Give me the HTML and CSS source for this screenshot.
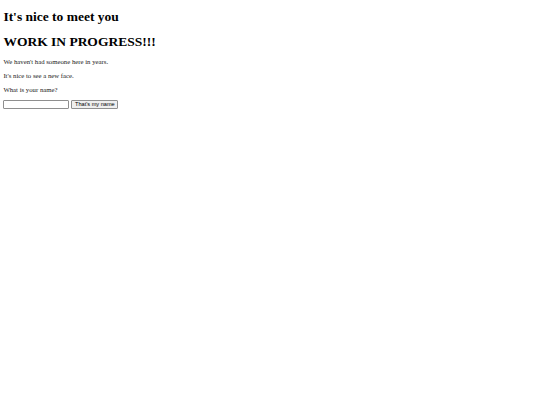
FILE: index.html
```html
<!DOCTYPE html>
<html>
<head>
<meta charset="utf-8">
<title>Hello</title>
<link rel="stylesheet" href="styles.css">
</head>
<body class="page">
<h1 class="title">It's nice to meet you</h1>
<h1 class="title title-sub">WORK IN PROGRESS!!!</h1>
<p class="text">We haven't had someone here in years.</p>
<p class="text">It's nice to see a new face.</p>
<p class="text">What is your name?</p>
<form class="form">
<input class="name-input" type="text">
<button class="name-button" type="button">That's my name</button>
</form>
</body>
</html>
```
FILE: styles.css
```css
html {
  background: #ffffff;
}
.page {
  margin: 3.375px;
  font-family: "Liberation Serif", "Times New Roman", serif;
  font-size: 6.75px;
  color: #000000;
}
.title {
  font-size: 13.5px;
  font-weight: bold;
  margin: 6px 0 9.05px;
}
.title-sub {
  margin-bottom: 7px;
}
.text {
  margin: 7.2px 0;
  color: #1a1a1a;
}
.form {
  margin: 7.2px 0 0;
  display: flex;
  align-items: center;
  gap: 2px;
}
.name-input {
  box-sizing: border-box;
  font-family: "Liberation Sans", Arial, sans-serif;
  font-size: 5.6px;
  width: 66px;
  height: 9px;
  padding: 0 1px;
  margin: 0;
  border: 1px solid #8f8f8f;
  border-radius: 1px;
  background: #ffffff;
}
.name-button {
  box-sizing: border-box;
  font-family: "Liberation Sans", Arial, sans-serif;
  font-size: 5.6px;
  width: 47px;
  height: 9px;
  padding: 0;
  margin: 0;
  border: 1px solid #8f8f8f;
  border-radius: 1px;
  background: #efefef;
  color: #000000;
  line-height: 7px;
}
```
